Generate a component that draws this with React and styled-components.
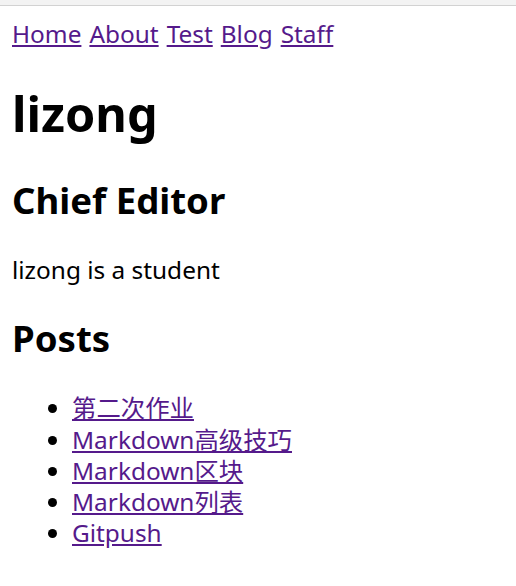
import React from 'react'
import styled, { createGlobalStyle } from 'styled-components'

const GlobalStyle = createGlobalStyle`
    html, body {
        margin: 0;
        padding: 0;
        background: #ffffff;
    }
    body {
        font-family: "Noto Sans", "Noto Sans CJK SC", sans-serif;
        font-size: 24.4px;
        line-height: 31.3px;
        color: #000000;
    }
`

const posts = ['第二次作业', 'Markdown高级技巧', 'Markdown区块', 'Markdown列表', 'Gitpush']
const navItems = ['Home', 'About', 'Test', 'Blog', 'Staff']

function App() {
    return (
        <>
            <GlobalStyle />
            <ChromeEdge />
            <Page>
                <Nav>
                    {navItems.map((item) => (
                        <NavLink key={item} href="#">{item}</NavLink>
                    ))}
                </Nav>
                <Name>lizong</Name>
                <Role>Chief Editor</Role>
                <Bio>lizong is a student</Bio>
                <Role>Posts</Role>
                <PostList>
                    {posts.map((post) => (
                        <li key={post}>
                            <PostLink href="#">{post}</PostLink>
                        </li>
                    ))}
                </PostList>
            </Page>
        </>
    )
}

export default App

const ChromeEdge = styled.div`
    height: 5px;
    background: #f3f3f3;
    border-bottom: 1px solid #d2d2d2;
`
const Page = styled.div`
    margin: 12px;
`
const Nav = styled.div`
    display: flex;
    gap: 8px;
    line-height: 32px;
`
const NavLink = styled.a`
    color: #551a8b;
    text-decoration: underline;
`
const Name = styled.h1`
    font-size: 48.6px;
    line-height: 63px;
    font-weight: 700;
    margin: 32px 0;
`
const Role = styled.h2`
    font-size: 36.6px;
    line-height: 47px;
    font-weight: 700;
    margin: 30px 0;
`
const Bio = styled.p`
    margin: 24px 0;
`
const PostList = styled.ul`
    margin: 24px 0;
    padding-left: 60px;
`
const PostLink = styled.a`
    color: #551a8b;
    text-decoration: underline;
`
